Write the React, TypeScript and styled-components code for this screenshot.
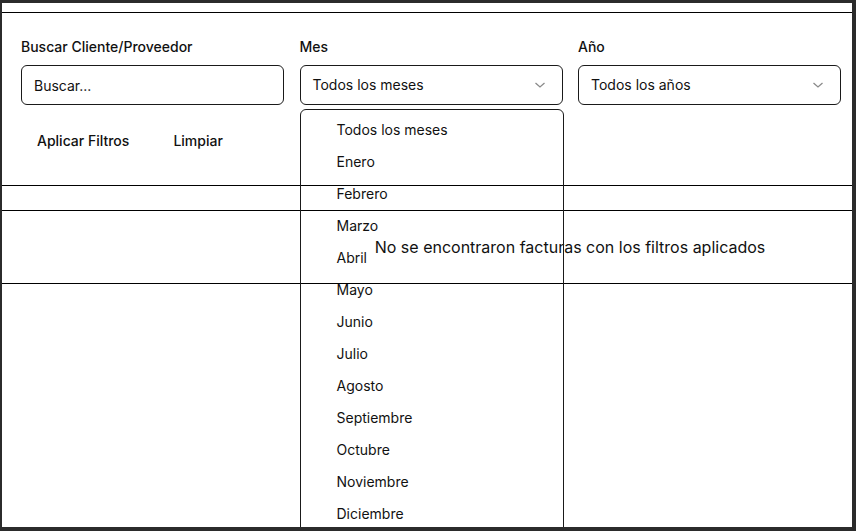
import React, { useState } from "react";
import styled, { createGlobalStyle } from "styled-components";

const GlobalStyle = createGlobalStyle`
  html, body {
    margin: 0;
    padding: 0;
    background: #2b2b2b;
    height: 100%;
    overflow: hidden;
  }
  * {
    box-sizing: border-box;
  }
`;

const Frame = styled.div`
  position: relative;
  margin: 3px 4px 0 2px;
  height: 524px;
  background: #ffffff;
  overflow: hidden;
  font-family: Inter, "Noto Sans", sans-serif;
  color: #111;
`;

const TopBar = styled.div`
  height: 10px;
  border-bottom: 1px solid #000;
`;

const FilterPanel = styled.section`
  padding: 24px 11px 27px 19px;
  border-bottom: 1px solid #000;
`;

const FieldGrid = styled.div`
  display: grid;
  grid-template-columns: repeat(3, 1fr);
  column-gap: 15.5px;
`;

const Field = styled.div`
  position: relative;
  display: flex;
  flex-direction: column;
`;

const Label = styled.label`
  font-size: 14px;
  font-weight: 500;
  line-height: 20px;
  margin-bottom: 8px;
`;

const TextInput = styled.input`
  height: 40px;
  border: 1px solid #1a1a1a;
  border-radius: 6px;
  padding: 0 12px;
  font-family: inherit;
  font-size: 14px;
  color: #111;
  outline: none;

  &::placeholder {
    color: #111;
  }
`;

const SelectBox = styled.div`
  height: 40px;
  border: 1px solid #1a1a1a;
  border-radius: 6px;
  padding: 0 16px 1px 12px;
  display: flex;
  align-items: center;
  justify-content: space-between;
  font-size: 14px;
  cursor: pointer;
`;

const Chevron = () => (
  <svg width="12" height="8" viewBox="0 0 12 8" fill="none">
    <path d="M1.5 2 L6 6 L10.5 2" stroke="#8a8a8a" strokeWidth="1.3" />
  </svg>
);

const Listbox = styled.ul`
  position: absolute;
  top: calc(100% + 4px);
  left: 0;
  width: calc(100% + 1px);
  margin: 0;
  padding: 3px 0 8px;
  list-style: none;
  border: 1px solid #1a1a1a;
  border-radius: 6px;
  background: transparent;
  z-index: 2;
`;

const Option = styled.li`
  height: 32px;
  display: flex;
  align-items: center;
  padding-left: 36px;
  font-size: 14px;
`;

const ButtonRow = styled.div`
  display: flex;
  gap: 12px;
  margin-top: 17px;
`;

const TextButton = styled.button`
  height: 36px;
  padding: 0 16px;
  background: none;
  border: none;
  font-family: inherit;
  font-size: 14px;
  font-weight: 500;
  color: #111;
  cursor: pointer;
`;

const HeaderRow = styled.div`
  height: 25px;
  border-bottom: 1px solid #000;
`;

const EmptyRow = styled.div`
  width: 1136px;
  height: 73px;
  border-bottom: 1px solid #000;
  display: flex;
  align-items: center;
  justify-content: center;
  font-family: Inter, "Noto Sans", sans-serif;
  font-size: 16px;
  color: #111;
`;

const months = [
  "Todos los meses",
  "Enero",
  "Febrero",
  "Marzo",
  "Abril",
  "Mayo",
  "Junio",
  "Julio",
  "Agosto",
  "Septiembre",
  "Octubre",
  "Noviembre",
  "Diciembre",
];

export default function App() {
  const [search, setSearch] = useState("");
  const [month] = useState("Todos los meses");

  return (
    <>
      <GlobalStyle />
      <Frame>
        <TopBar />
        <FilterPanel>
          <FieldGrid>
            <Field>
              <Label>Buscar Cliente/Proveedor</Label>
              <TextInput
                placeholder="Buscar..."
                value={search}
                onChange={(e) => setSearch(e.target.value)}
              />
            </Field>
            <Field>
              <Label>Mes</Label>
              <SelectBox>
                <span>{month}</span>
                <Chevron />
              </SelectBox>
              <Listbox>
                {months.map((m) => (
                  <Option key={m}>{m}</Option>
                ))}
              </Listbox>
            </Field>
            <Field>
              <Label>Año</Label>
              <SelectBox>
                <span>Todos los años</span>
                <Chevron />
              </SelectBox>
            </Field>
          </FieldGrid>
          <ButtonRow>
            <TextButton>Aplicar Filtros</TextButton>
            <TextButton>Limpiar</TextButton>
          </ButtonRow>
        </FilterPanel>
        <HeaderRow />
        <EmptyRow>No se encontraron facturas con los filtros aplicados</EmptyRow>
      </Frame>
    </>
  );
}
